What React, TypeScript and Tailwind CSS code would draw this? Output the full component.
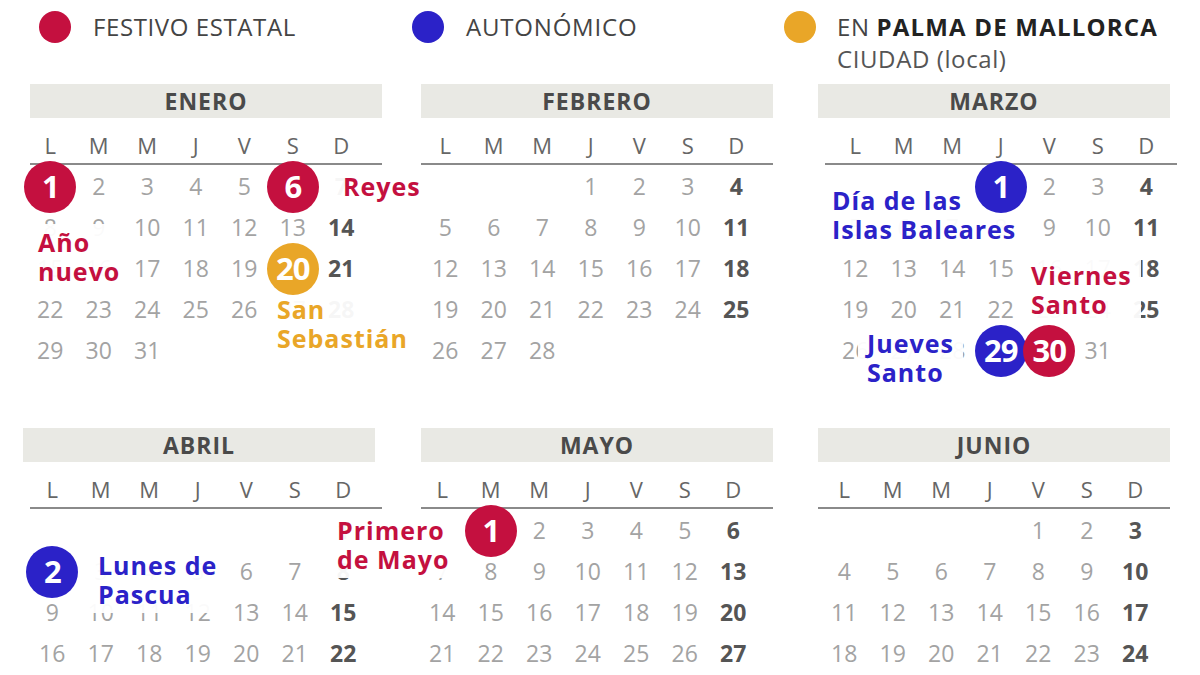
import React from "react";

type Kind = "red" | "blue" | "orange";
type Label = { lines: string[]; kind: Kind; pos: string };
type Month = {
  name: string;
  start: number; // 0 = lunes
  days: number;
  place: string;
  grid: string;
  line: string;
  marks: Record<number, Kind>;
  labels: Label[];
};

const fill: Record<Kind, string> = {
  red: "bg-[#c4103f]",
  blue: "bg-[#2b22c8]",
  orange: "bg-[#e9a628]",
};
const ink: Record<Kind, string> = {
  red: "text-[#c4103f]",
  blue: "text-[#2b22c8]",
  orange: "text-[#e9a628]",
};

const DOW = ["L", "M", "M", "J", "V", "S", "D"];

const top: Month[] = [
  {
    name: "ENERO", start: 0, days: 31, place: "ml-[30px]", grid: "ml-[-4px]", line: "ml-0",
    marks: { 1: "red", 6: "red", 20: "orange" },
    labels: [
      { lines: ["Reyes"], kind: "red", pos: "left-[304px] top-[84px]" },
      { lines: ["Año", "nuevo"], kind: "red", pos: "left-[-1px] top-[140px]" },
      { lines: ["San", "Sebastián"], kind: "orange", pos: "left-[238px] top-[207px]" },
    ],
  },
  { name: "FEBRERO", start: 3, days: 28, place: "ml-[39px]", grid: "ml-0", line: "ml-0", marks: {}, labels: [] },
  {
    name: "MARZO", start: 3, days: 31, place: "ml-[45px]", grid: "ml-[13px]", line: "ml-[7px]",
    marks: { 1: "blue", 29: "blue", 30: "red" },
    labels: [
      { lines: ["Día de las", "Islas Baleares"], kind: "blue", pos: "left-[5px] top-[98px]" },
      { lines: ["Viernes", "Santo"], kind: "red", pos: "left-[204px] top-[173px]" },
      { lines: ["Jueves", "Santo"], kind: "blue", pos: "left-[40px] top-[241px]" },
    ],
  },
];

const bottom: Month[] = [
  {
    name: "ABRIL", start: 6, days: 30, place: "ml-[23px]", grid: "ml-[5px]", line: "ml-[7px]",
    marks: { 2: "blue" },
    labels: [{ lines: ["Lunes de", "Pascua"], kind: "blue", pos: "left-[66px] top-[119px]" }],
  },
  {
    name: "MAYO", start: 1, days: 31, place: "ml-[46px]", grid: "ml-[-3px]", line: "ml-0",
    marks: { 1: "red" },
    labels: [{ lines: ["Primero", "de Mayo"], kind: "red", pos: "left-[-93px] top-[84px]" }],
  },
  { name: "JUNIO", start: 4, days: 30, place: "ml-[45px]", grid: "ml-[2px]", line: "ml-0", marks: {}, labels: [] },
];

function MonthBlock({ m, rows }: { m: Month; rows: number }) {
  const cells: (number | null)[] = [];
  for (let i = 0; i < m.start; i++) cells.push(null);
  for (let d = 1; d <= m.days; d++) cells.push(d);
  const shown = cells.slice(0, rows * 7);

  return (
    <div className={`relative w-[352px] shrink-0 ${m.place}`}>
      <div className="h-[34px] bg-[#e9e9e4] flex items-center justify-center text-[23px] font-bold tracking-[1px] text-[#4a4a4a]">
        {m.name}
      </div>
      <div className={`mt-[10px] h-[35px] grid grid-cols-[repeat(7,48.5px)] items-center ${m.grid}`}>
        {DOW.map((d, i) => (
          <div key={i} className="text-center text-[22px] text-[#666]">{d}</div>
        ))}
      </div>
      <div className={`h-[2px] w-[352px] bg-[#8a8a8a] ${m.line}`} />
      <div className={`mt-[1px] grid grid-cols-[repeat(7,48.5px)] ${m.grid}`}>
        {shown.map((d, i) => {
          const mark = d ? m.marks[d] : undefined;
          const sunday = i % 7 === 6;
          return (
            <div key={i} className="relative h-[41px] flex items-center justify-center">
              {d && !mark && (
                <span className={`text-[23px] ${sunday ? "font-bold text-[#555]" : "text-[#a3a3a3]"}`}>{d}</span>
              )}
              {d && mark && (
                <span className={`absolute z-20 left-1/2 top-1/2 -translate-x-1/2 -translate-y-1/2 w-[52px] h-[52px] rounded-full flex items-center justify-center text-white text-[31px] font-bold tracking-[-1px] ${fill[mark]}`}>
                  {d}
                </span>
              )}
            </div>
          );
        })}
      </div>
      {m.labels.map((l, i) => (
        <div key={i} className={`absolute z-10 px-[9px] py-[4px] bg-white/95 text-[25px] leading-[29px] font-bold tracking-[1px] whitespace-nowrap ${ink[l.kind]} ${l.pos}`}>
          {l.lines.map((t, j) => (
            <div key={j}>{t}</div>
          ))}
        </div>
      ))}
    </div>
  );
}

export default function App() {
  return (
    <div className="w-[1200px] h-[675px] overflow-hidden bg-white font-['Open_Sans',sans-serif]">
      {/* leyenda */}
      <div className="h-[84px] flex items-start pt-[11px]">
        <div className="ml-[39px] w-[373px] flex items-center gap-[22px] h-[32px]">
          <span className="w-[32px] h-[32px] rounded-full bg-[#c4103f]" />
          <span className="text-[24px] tracking-[0.6px] text-[#444]">FESTIVO ESTATAL</span>
        </div>
        <div className="w-[372px] flex items-center gap-[22px] h-[32px]">
          <span className="w-[32px] h-[32px] rounded-full bg-[#2b22c8]" />
          <span className="text-[24px] tracking-[0.8px] text-[#444]">AUTONÓMICO</span>
        </div>
        <div className="flex items-start gap-[21px]">
          <span className="w-[32px] h-[32px] rounded-full bg-[#e9a628] shrink-0" />
          <div className="text-[24px] text-[#444] leading-[32px] tracking-[0.6px]">
            <div>EN <span className="font-bold tracking-[1.2px] text-[#222]">PALMA DE MALLORCA</span></div>
            <div className="text-[#555]">CIUDAD (local)</div>
          </div>
        </div>
      </div>

      <div className="h-[344px] flex items-start">
        {top.map((m) => (
          <MonthBlock key={m.name} m={m} rows={5} />
        ))}
      </div>
      <div className="flex items-start">
        {bottom.map((m) => (
          <MonthBlock key={m.name} m={m} rows={4} />
        ))}
      </div>
    </div>
  );
}
